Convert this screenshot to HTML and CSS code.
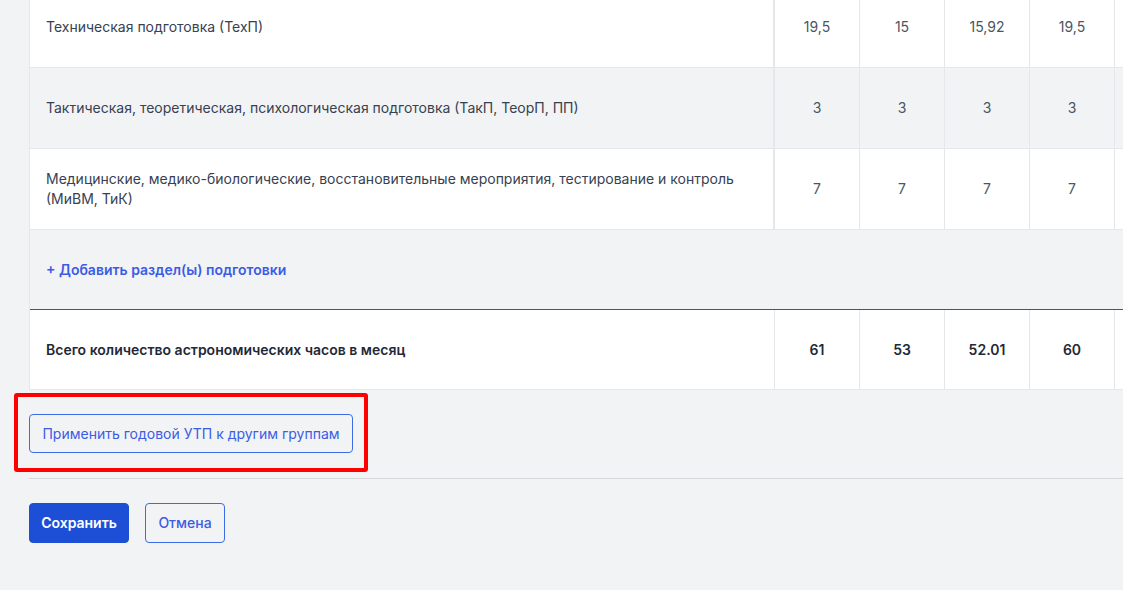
FILE: index.html
```html
<!DOCTYPE html>
<html lang="ru">
<head>
<meta charset="utf-8">
<title>УТП</title>
<link rel="stylesheet" href="styles.css">
</head>
<body>
<div class="page">
  <div class="plan-table">
    <div class="row">
      <div class="cell name">Техническая подготовка (ТехП)</div>
      <div class="cell num">19,5</div>
      <div class="cell num">15</div>
      <div class="cell num">15,92</div>
      <div class="cell num">19,5</div>
      <div class="cell num"></div>
    </div>
    <div class="row alt">
      <div class="cell name">Тактическая, теоретическая, психологическая подготовка (ТакП, ТеорП, ПП)</div>
      <div class="cell num">3</div>
      <div class="cell num">3</div>
      <div class="cell num">3</div>
      <div class="cell num">3</div>
      <div class="cell num"></div>
    </div>
    <div class="row">
      <div class="cell name">Медицинские, медико-биологические, восстановительные мероприятия, тестирование и контроль (МиВМ, ТиК)</div>
      <div class="cell num">7</div>
      <div class="cell num">7</div>
      <div class="cell num">7</div>
      <div class="cell num">7</div>
      <div class="cell num"></div>
    </div>
    <div class="add-row">
      <a class="add-link" href="#">+ Добавить раздел(ы) подготовки</a>
    </div>
    <div class="row total">
      <div class="cell name">Всего количество астрономических часов в месяц</div>
      <div class="cell num">61</div>
      <div class="cell num">53</div>
      <div class="cell num">52.01</div>
      <div class="cell num">60</div>
      <div class="cell num"></div>
    </div>
  </div>

  <div class="apply-section">
    <button class="btn btn-outline btn-apply" type="button">Применить годовой УТП к другим группам</button>
    <div class="highlight"></div>
  </div>

  <div class="actions">
    <button class="btn btn-primary" type="button">Сохранить</button>
    <button class="btn btn-outline btn-cancel" type="button">Отмена</button>
  </div>
</div>
</body>
</html>
```

FILE: styles.css
```css
* {
  box-sizing: border-box;
}

html, body {
  margin: 0;
  padding: 0;
  background: #f2f3f5;
}

body {
  font-family: Inter, "Noto Sans", "Liberation Sans", sans-serif;
  font-size: 14px;
  color: #374151;
  width: 1123px;
  height: 590px;
  overflow: hidden;
}

.page {
  padding-left: 29px;
  width: 1123px;
  overflow: hidden;
}

.plan-table {
  margin-top: -13px;
  border-left: 1px solid #e5e7eb;
  width: 1300px;
}

.row {
  display: grid;
  grid-template-columns: 745px 85px 85px 85px 85px 85px;
  height: 81px;
  background: #ffffff;
  border-bottom: 1px solid #e5e7eb;
}

.row.alt {
  background: #f2f3f5;
}

.cell {
  display: flex;
  align-items: center;
  border-right: 1px solid #e5e7eb;
  line-height: 20px;
}

.cell.name {
  padding: 0 16px;
  border-right: 2px solid #e5e7eb;
  color: #374151;
}

.cell.num {
  justify-content: center;
  color: #4b5563;
}

.add-row {
  height: 80px;
  background: #f2f3f5;
  border-bottom: 1px solid #4b5563;
  display: flex;
  align-items: center;
  padding: 0 16px;
}

.add-link {
  color: #3b5ce4;
  font-weight: 600;
  text-decoration: none;
}

.row.total {
  height: 80px;
}

.row.total .cell {
  font-weight: 600;
  color: #1f2937;
}

.row.total .cell.name {
  border-right-width: 1px;
}

.apply-section {
  position: relative;
  padding: 24px 0 25px;
  border-bottom: 1px solid #d4d6dc;
}

.btn {
  font-family: Inter, "Noto Sans", "Liberation Sans", sans-serif;
  font-size: 14px;
  border-radius: 4px;
  cursor: pointer;
  line-height: 20px;
}

.btn-outline {
  background: transparent;
  border: 1px solid #3b6be6;
  color: #3b5ce4;
  font-weight: 500;
}

.btn-apply {
  height: 39px;
  width: 324px;
  padding: 0 12px;
  font-weight: 400;
}

.highlight {
  position: absolute;
  left: -15px;
  top: 3px;
  width: 354px;
  height: 79px;
  border: 4px solid #ff0000;
  border-radius: 3px;
  pointer-events: none;
}

.actions {
  display: flex;
  gap: 16px;
  padding-top: 24px;
}

.btn-primary {
  height: 40px;
  width: 100px;
  background: #1c4fd6;
  border: 1px solid #1c4fd6;
  color: #ffffff;
  font-weight: 600;
}

.btn-cancel {
  height: 40px;
  width: 80px;
}
```
